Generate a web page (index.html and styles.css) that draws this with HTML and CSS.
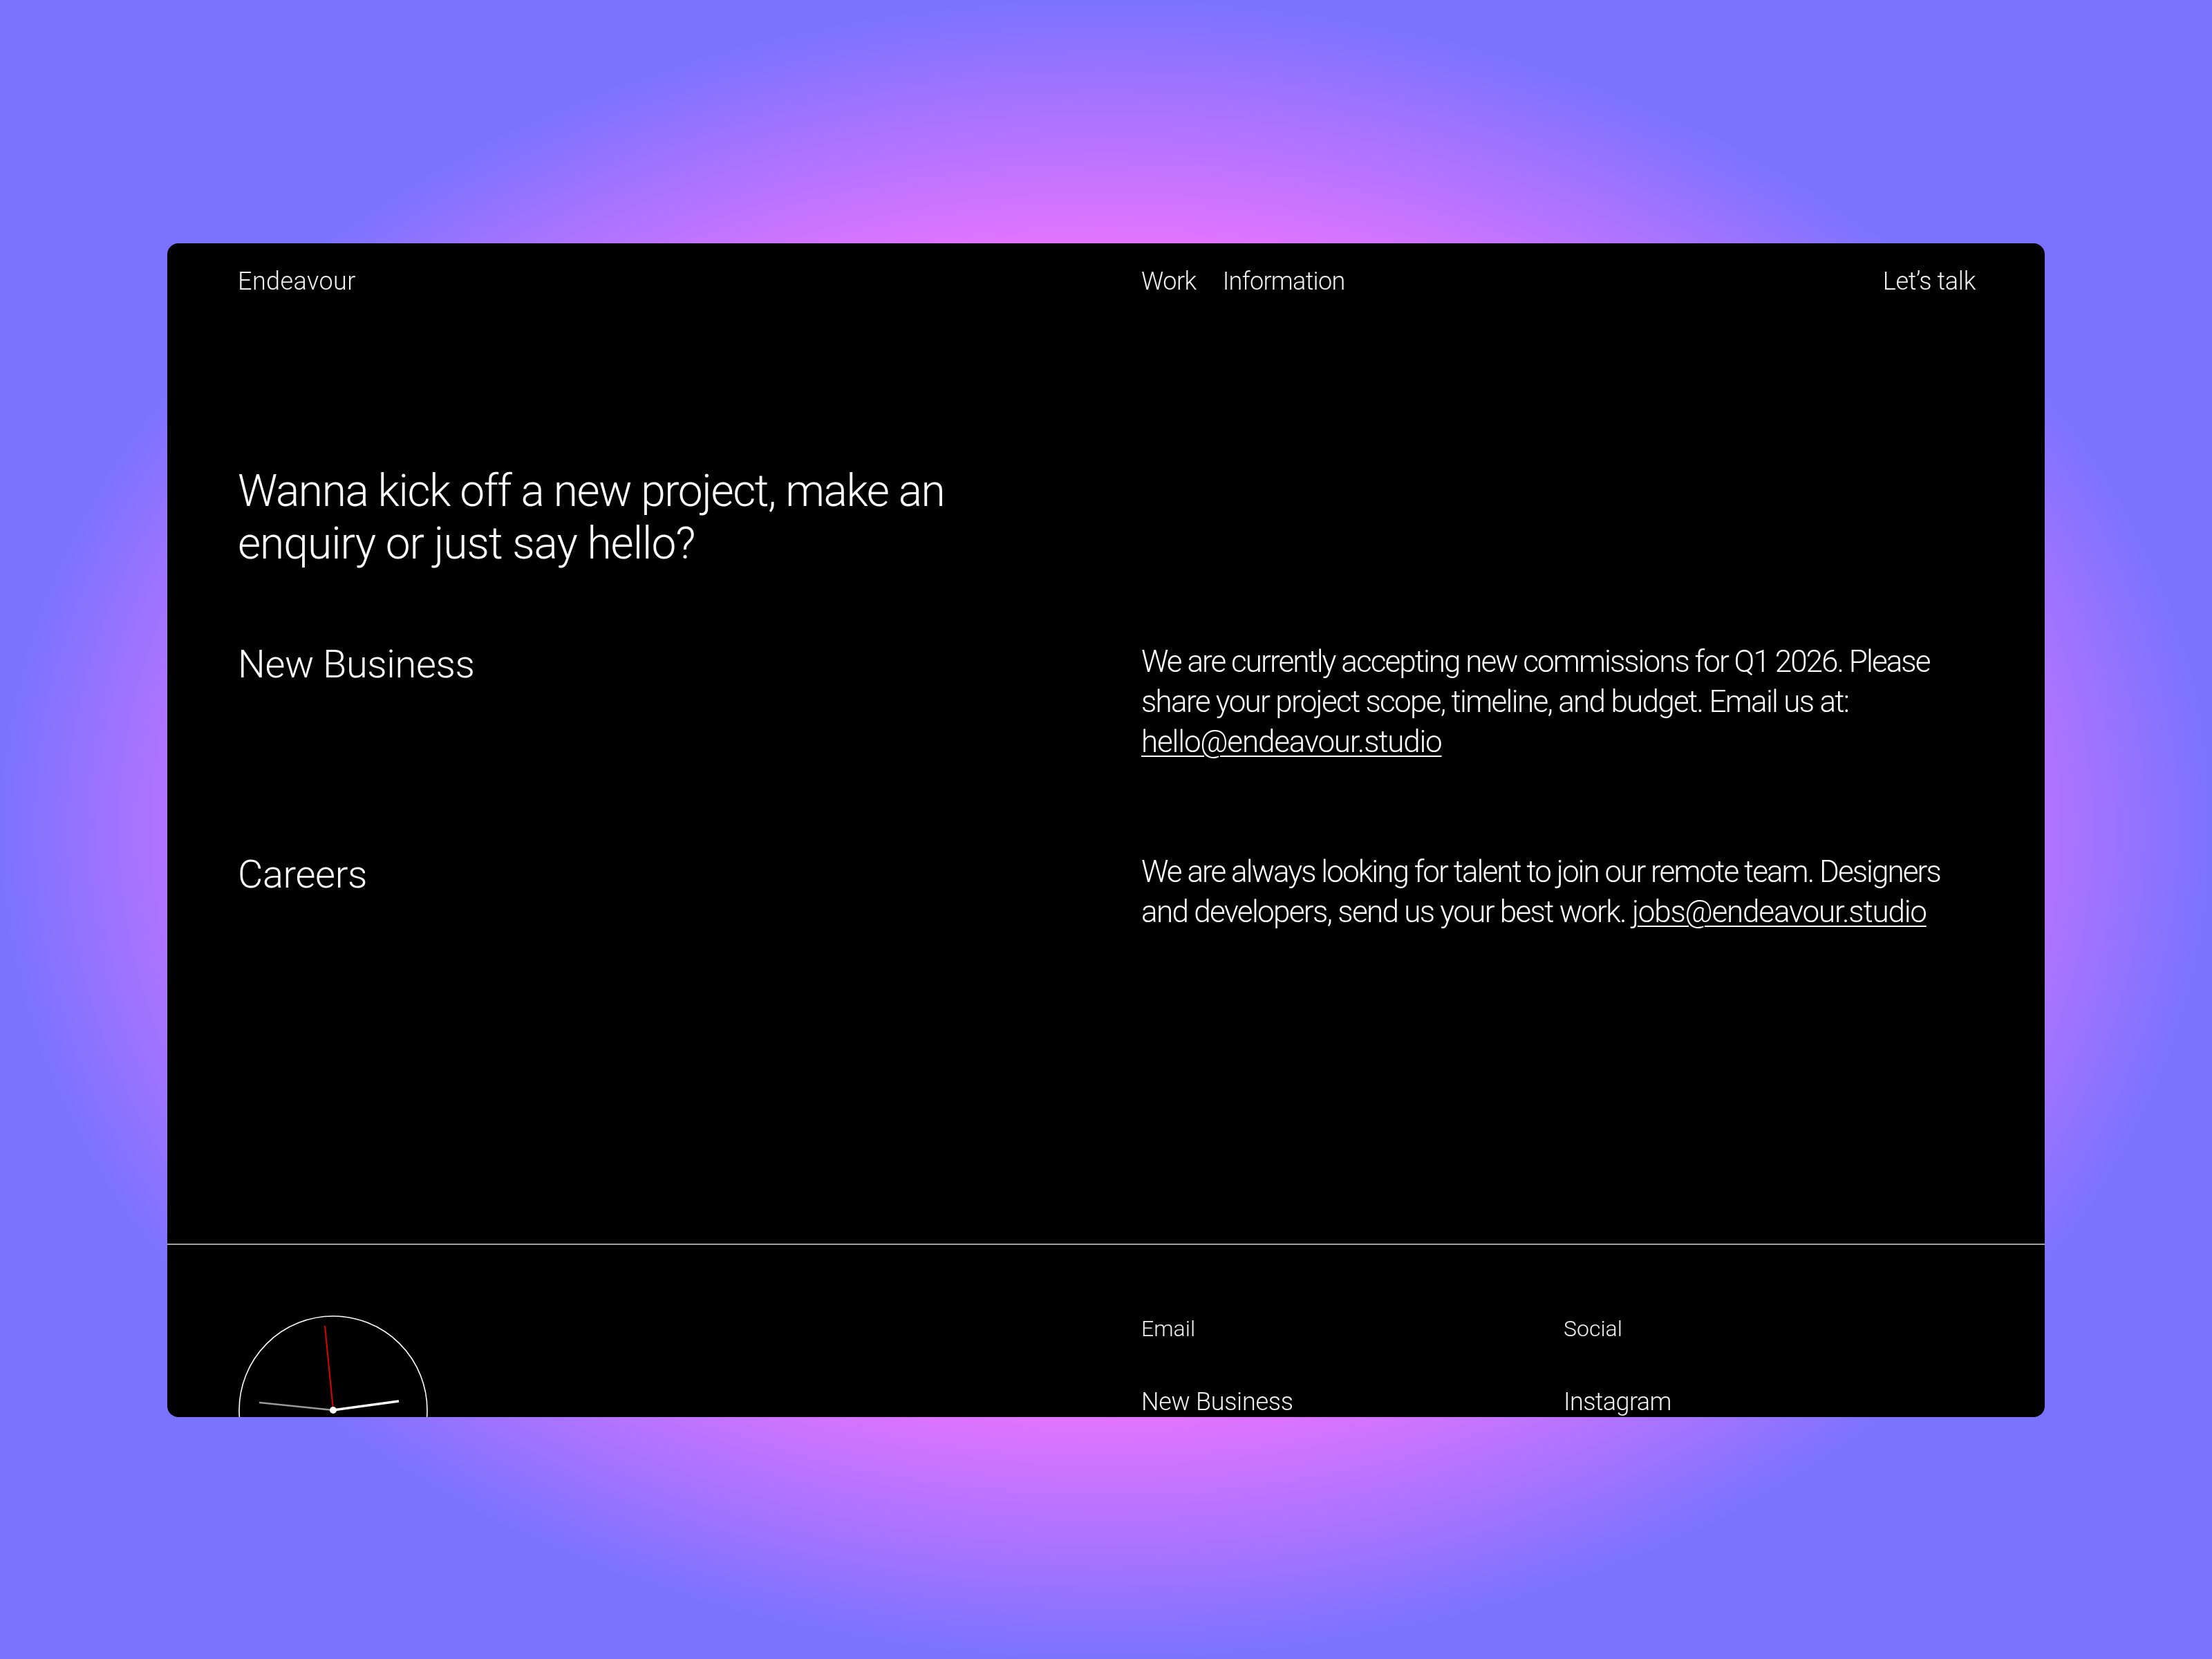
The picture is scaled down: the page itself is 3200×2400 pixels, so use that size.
FILE: index.html
```html
<!DOCTYPE html>
<html lang="en">
<head>
<meta charset="utf-8">
<title>Endeavour</title>
<link rel="stylesheet" href="styles.css">
</head>
<body>
<div class="card">
  <div class="main">
    <header class="nav">
      <a class="nav-brand">Endeavour</a>
      <nav class="nav-links"><a>Work</a><a class="nav-info">Information</a></nav>
      <a class="nav-end">Let’s talk</a>
    </header>
    <h1 class="headline">Wanna kick off a new project, make an<br><span class="headline-second">enquiry or just say hello?</span></h1>
    <section class="row row-business">
      <h2 class="row-title">New Business</h2>
      <p class="row-text"><span class="tight">We are currently accepting new commissions for Q1 2026. Please</span><br>share your project scope, timeline, and budget. Email us at:<br><a class="mail">hello@endeavour.studio</a></p>
    </section>
    <section class="row">
      <h2 class="row-title">Careers</h2>
      <p class="row-text"><span class="tight">We are always looking for talent to join our remote team. Designers</span><br>and developers, send us your best work. <a class="mail">jobs@endeavour.studio</a></p>
    </section>
  </div>
  <footer class="footer">
    <div class="clock-col">
      <svg class="clock" width="276" height="276" viewBox="0 0 276 276">
        <circle cx="138" cy="138" r="136" fill="none" stroke="#fff" stroke-width="1.6"/>
        <line x1="138" y1="138" x2="31" y2="127" stroke="#999" stroke-width="2.5"/>
        <line x1="138" y1="138" x2="233" y2="125" stroke="#fff" stroke-width="3.5"/>
        <line x1="138" y1="138" x2="126" y2="16" stroke="#e00000" stroke-width="2"/>
        <circle cx="138" cy="138" r="5" fill="#fff"/>
      </svg>
    </div>
    <div class="foot-col">
      <div class="foot-label">Email</div>
      <a class="foot-link">New Business</a>
    </div>
    <div class="foot-col">
      <div class="foot-label">Social</div>
      <a class="foot-link foot-link-tight">Instagram</a>
    </div>
  </footer>
</div>
</body>
</html>
```

FILE: styles.css
```css
html, body { margin: 0; padding: 0; }
body {
  width: 3200px;
  height: 2400px;
  overflow: hidden;
  padding-top: 352px;
  box-sizing: border-box;
  background: radial-gradient(ellipse 1600px 1200px at 50% 50%, #e274ff 0%, #e274ff 70.7%, #7b73ff 100%);
  font-family: Roboto, "Liberation Sans", sans-serif;
  font-weight: 300;
  color: #fff;
}
h1, h2, p { margin: 0; font-weight: 300; }
.card {
  width: 2716px;
  height: 1698px;
  margin: 0 auto;
  background: #000;
  border-radius: 16px;
  overflow: hidden;
  will-change: transform;
}
.main {
  height: 1449px;
  box-sizing: border-box;
  padding: 32px 100px 0 102px;
  border-bottom: 2px solid #a0a0a0;
}
.nav {
  display: grid;
  grid-template-columns: 1307px 1fr auto;
  font-size: 36px;
  line-height: 47px;
  color: #f0f0f0;
}
.nav-brand { letter-spacing: 0.4px; }
.nav-links { display: flex; gap: 38px; letter-spacing: -0.5px; }
.nav-info { letter-spacing: -0.7px; }
.nav-end { letter-spacing: -0.3px; }
.headline {
  margin-top: 242px;
  font-size: 64px;
  line-height: 76px;
  letter-spacing: -1.4px;
  white-space: nowrap;
}
.headline-second { letter-spacing: -1px; }
.row {
  display: grid;
  grid-template-columns: 1307px 1fr;
  height: 304px;
}
.row-business { margin-top: 103px; }
.row-title { font-size: 56px; line-height: 66px; letter-spacing: -0.4px; }
.row-text { font-size: 44px; line-height: 58px; letter-spacing: -1.7px; white-space: nowrap; }
.tight { letter-spacing: -1.95px; }
.mail {
  letter-spacing: -1.2px;
  text-decoration: underline;
  text-decoration-thickness: 2px;
  text-underline-offset: 5px;
}
.footer {
  display: grid;
  grid-template-columns: 1307px 611px 1fr;
  padding: 101px 100px 0 102px;
}
.foot-label { font-size: 32px; line-height: 40px; color: #f0f0f0; }
.foot-link {
  display: block;
  margin-top: 64px;
  font-size: 36px;
  line-height: 44px;
  letter-spacing: -0.3px;
  color: #f0f0f0;
}
.foot-link-tight { letter-spacing: -0.6px; }
.clock { display: block; }
```
